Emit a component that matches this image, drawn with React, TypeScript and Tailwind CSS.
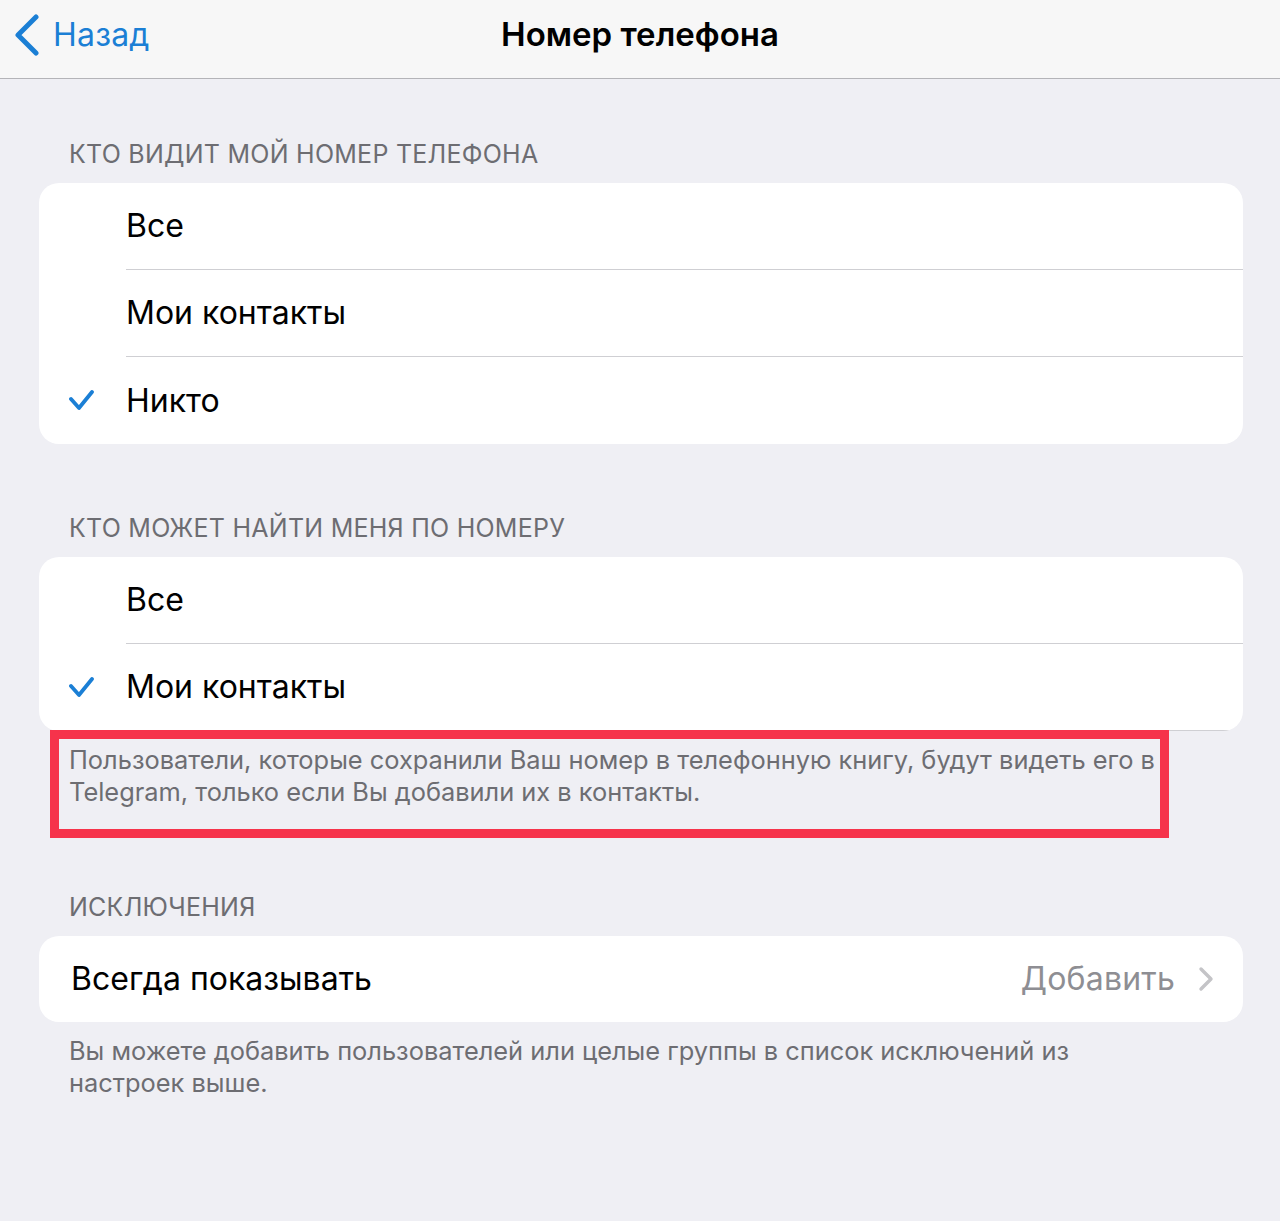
const FONT = "font-['Inter','Noto_Sans',sans-serif]";

function CheckMark() {
  return (
    <svg width="26" height="22" viewBox="0 0 26 22" className="text-[#1b7fd5]">
      <polyline
        points="2,9 10,18 23,2"
        fill="none"
        stroke="currentColor"
        strokeWidth="3.8"
        strokeLinecap="round"
        strokeLinejoin="round"
      />
    </svg>
  );
}

interface OptionRowProps {
  label: string;
  checked?: boolean;
  last?: boolean;
}

function OptionRow({ label, checked, last }: OptionRowProps) {
  return (
    <div className="flex h-[87px] items-stretch">
      <div className="flex w-[87px] shrink-0 items-center pl-[30px] pt-[1px]">
        {checked && <CheckMark />}
      </div>
      <div
        className={
          last
            ? "flex flex-1 items-center text-[32px] text-black"
            : "flex flex-1 items-center border-b border-[#cfcfd3] text-[32px] text-black"
        }
      >
        {label}
      </div>
    </div>
  );
}

function SectionLabel({ children }: { children: string }) {
  return (
    <div className="h-[30px] pl-[30px] text-[25px] leading-[30px] tracking-[0.25px] text-[#6d6d72]">
      {children}
    </div>
  );
}

export default function App() {
  return (
    <div className={`${FONT} min-h-[1221px] w-[1280px] bg-[#efeff4]`}>
      <header className="relative flex h-[79px] items-center justify-center border-b border-[#b4b4b8] bg-[#f7f7f7] pb-[8px]">
        <div className="absolute left-[14px] top-0 flex h-full items-center pb-[8px] text-[#1b7fd5]">
          <svg width="26" height="42" viewBox="0 0 26 42">
            <polyline
              points="22,3 4,21 22,39"
              fill="none"
              stroke="currentColor"
              strokeWidth="5"
              strokeLinecap="round"
              strokeLinejoin="round"
            />
          </svg>
          <span className="ml-[13px] text-[32px] tracking-[0.2px]">Назад</span>
        </div>
        <h1 className="text-[33px] font-semibold text-black">Номер телефона</h1>
      </header>

      <main className="pb-[100px] pl-[39px] pr-[37px]">
        <div className="mt-[60px]">
          <SectionLabel>КТО ВИДИТ МОЙ НОМЕР ТЕЛЕФОНА</SectionLabel>
          <div className="mt-[14px] overflow-hidden rounded-[20px] bg-white">
            <OptionRow label="Все" />
            <OptionRow label="Мои контакты" />
            <OptionRow label="Никто" checked last />
          </div>
        </div>

        <div className="mt-[69px]">
          <SectionLabel>КТО МОЖЕТ НАЙТИ МЕНЯ ПО НОМЕРУ</SectionLabel>
          <div className="mt-[14px] overflow-hidden rounded-[20px] bg-white">
            <OptionRow label="Все" />
            <OptionRow label="Мои контакты" checked />
          </div>
          <div className="relative">
            <p className="pl-[30px] pr-[60px] pt-[13px] text-[25.4px] leading-[32px] text-[#6d6d72]">
              Пользователи, которые сохранили Ваш номер в телефонную книгу, будут видеть его в
              Telegram, только если Вы добавили их в контакты.
            </p>
            <div className="absolute left-[11px] top-[-1px] h-[108px] w-[1119px] border-[9px] border-[#f6334b]" />
          </div>
        </div>

        <div className="mt-[84px]">
          <SectionLabel>ИСКЛЮЧЕНИЯ</SectionLabel>
          <div className="mt-[14px] flex h-[86px] items-center rounded-[20px] bg-white pl-[32px] pr-[29px]">
            <span className="flex-1 text-[32px] text-black">Всегда показывать</span>
            <span className="text-[32px] tracking-[0.2px] text-[#8e8e93]">Добавить</span>
            <svg width="16" height="26" viewBox="0 0 16 26" className="ml-[23px] text-[#c4c4c7]">
              <polyline
                points="3,3 13,13 3,23"
                fill="none"
                stroke="currentColor"
                strokeWidth="3.4"
                strokeLinecap="round"
                strokeLinejoin="round"
              />
            </svg>
          </div>
          <p className="pl-[30px] pr-[100px] pt-[13px] text-[25.4px] leading-[32px] text-[#6d6d72]">
            Вы можете добавить пользователей или целые группы в список исключений из настроек выше.
          </p>
        </div>
      </main>
    </div>
  );
}
